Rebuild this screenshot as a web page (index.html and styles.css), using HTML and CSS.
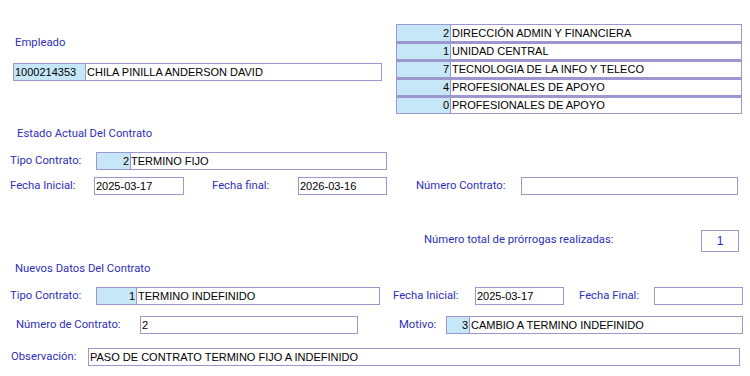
FILE: index.html
```html
<!DOCTYPE html>
<html lang="es">
<head>
    <meta charset="UTF-8">
    <title>Prórroga de contrato</title>
    <link rel="stylesheet" href="styles.css">
</head>
<body>
    <div class="form">
        <div class="top">
            <div class="emp">
                <div class="title">Empleado</div>
                <div class="field emp-field">
                    <span class="code code-left">1000214353</span>
                    <span class="val">CHILA PINILLA ANDERSON DAVID</span>
                </div>
            </div>
            <div class="deps">
                <div class="dep"><span class="code">2</span><span class="val">DIRECCIÓN ADMIN Y FINANCIERA</span></div>
                <div class="dep"><span class="code">1</span><span class="val">UNIDAD CENTRAL</span></div>
                <div class="dep"><span class="code">7</span><span class="val">TECNOLOGIA DE LA INFO Y TELECO</span></div>
                <div class="dep"><span class="code">4</span><span class="val">PROFESIONALES DE APOYO</span></div>
                <div class="dep"><span class="code">0</span><span class="val">PROFESIONALES DE APOYO</span></div>
            </div>
        </div>

        <!-- estado actual -->
        <div class="title sec1">Estado Actual Del Contrato</div>
        <div class="row r-tipo1">
            <label class="lbl w86">Tipo Contrato:</label>
            <div class="field w291"><span class="code w34">2</span><span class="val tight">TERMINO FIJO</span></div>
        </div>
        <div class="row r-fechas1">
            <label class="lbl w84">Fecha Inicial:</label>
            <div class="field w90"><span class="val">2025-03-17</span></div>
            <label class="lbl w86 ml28">Fecha final:</label>
            <div class="field w89"><span class="val">2026-03-16</span></div>
            <label class="lbl w105 ml29">Número Contrato:</label>
            <div class="field w217"></div>
        </div>
        <div class="row r-prorrogas">
            <label class="lbl w277">Número total de prórrogas realizadas:</label>
            <div class="field count">1</div>
        </div>

        <!-- nuevos datos -->
        <div class="title sec2">Nuevos Datos Del Contrato</div>
        <div class="row r-tipo2">
            <label class="lbl w86">Tipo Contrato:</label>
            <div class="field w284"><span class="code w40">1</span><span class="val">TERMINO INDEFINIDO</span></div>
            <label class="lbl w82 ml13">Fecha Inicial:</label>
            <div class="field w89"><span class="val">2025-03-17</span></div>
            <label class="lbl w75 ml15">Fecha Final:</label>
            <div class="field w89"></div>
        </div>
        <div class="row r-numero">
            <label class="lbl w124 pl6">Número de Contrato:</label>
            <div class="field w218"><span class="val">2</span></div>
            <label class="lbl w47 ml41">Motivo:</label>
            <div class="field w297"><span class="code w23">3</span><span class="val">CAMBIO A TERMINO INDEFINIDO</span></div>
        </div>
        <div class="row r-obs">
            <label class="lbl w78 pl1">Observación:</label>
            <div class="field w652"><span class="val">PASO DE CONTRATO TERMINO FIJO A INDEFINIDO</span></div>
        </div>
    </div>
</body>
</html>
```

FILE: styles.css
```css
* {
    box-sizing: border-box;
    margin: 0;
    padding: 0;
}

body {
    background-color: #ffffff;
    font-family: "Liberation Sans", Arial, sans-serif;
    font-size: 11px;
    color: #000000;
}

.form {
    width: 750px;
    height: 376px;
    padding-left: 10px;
    overflow: hidden;
}

/* labels and headings */
.title,
.lbl {
    font-family: Roboto, "Liberation Sans", sans-serif;
    font-size: 11.3px;
    line-height: 14px;
    color: #2f2fb8;
}

.lbl {
    display: block;
    flex: none;
    white-space: nowrap;
}

/* boxes */
.field {
    display: flex;
    flex: none;
    height: 18px;
    border: 1px solid #9d97cf;
    background-color: #ffffff;
    line-height: 16px;
    overflow: hidden;
    white-space: nowrap;
}

.code {
    flex: none;
    background-color: #c6e7f8;
    border-right: 1px solid #9d97cf;
    text-align: right;
    padding-right: 1px;
}

.code-left {
    width: 72px;
    text-align: left;
    padding-left: 1px;
}

.val {
    padding-left: 1px;
}

.val.tight {
    padding-left: 0;
}

/* top block */
.top {
    display: flex;
    padding-top: 24px;
    height: 114px;
}

.emp {
    width: 386px;
    padding-left: 3px;
}

.emp .title {
    margin-top: 12px;
    padding-left: 2px;
}

.emp-field {
    margin-top: 13px;
    width: 369px;
}

.deps {
    width: 346px;
}

.dep {
    display: flex;
    height: 18px;
    line-height: 16px;
    border: 1px solid #9d97cf;
    white-space: nowrap;
}

.dep + .dep {
    border-top-width: 2px;
    line-height: 15px;
}

.dep .code {
    width: 54px;
}

/* rows */
.row {
    display: flex;
    align-items: center;
}

.sec1 {
    margin-top: 13px;
    padding-left: 7px;
}

.sec2 {
    margin-top: 10px;
    padding-left: 5px;
}

.r-tipo1 { margin-top: 11px; }
.r-fechas1 { margin-top: 7px; }
.r-prorrogas { margin-top: 35px; padding-left: 414px; }
.r-tipo2 { margin-top: 11px; }
.r-numero { margin-top: 11px; }
.r-obs { margin-top: 14px; }

.r-prorrogas .lbl {
    margin-top: -2px;
}

.count {
    width: 38px;
    height: 22px;
    justify-content: center;
    align-items: center;
    font-size: 12px;
    color: #2424e0;
}

/* widths */
.w23 { width: 23px; }
.w34 { width: 34px; }
.w40 { width: 40px; }
.w47 { width: 47px; }
.w75 { width: 75px; }
.w78 { width: 78px; }
.w82 { width: 82px; }
.w84 { width: 84px; }
.w86 { width: 86px; }
.w89 { width: 89px; }
.w90 { width: 90px; }
.w105 { width: 105px; }
.w124 { width: 130px; }
.w217 { width: 217px; }
.w218 { width: 218px; }
.w277 { width: 277px; }
.w284 { width: 284px; }
.w291 { width: 291px; }
.w297 { width: 297px; }
.w652 { width: 652px; }

.ml13 { margin-left: 13px; }
.ml15 { margin-left: 15px; }
.ml28 { margin-left: 28px; }
.ml29 { margin-left: 29px; }
.ml41 { margin-left: 41px; }

.pl1 { padding-left: 1px; }
.pl6 { padding-left: 6px; }
```
